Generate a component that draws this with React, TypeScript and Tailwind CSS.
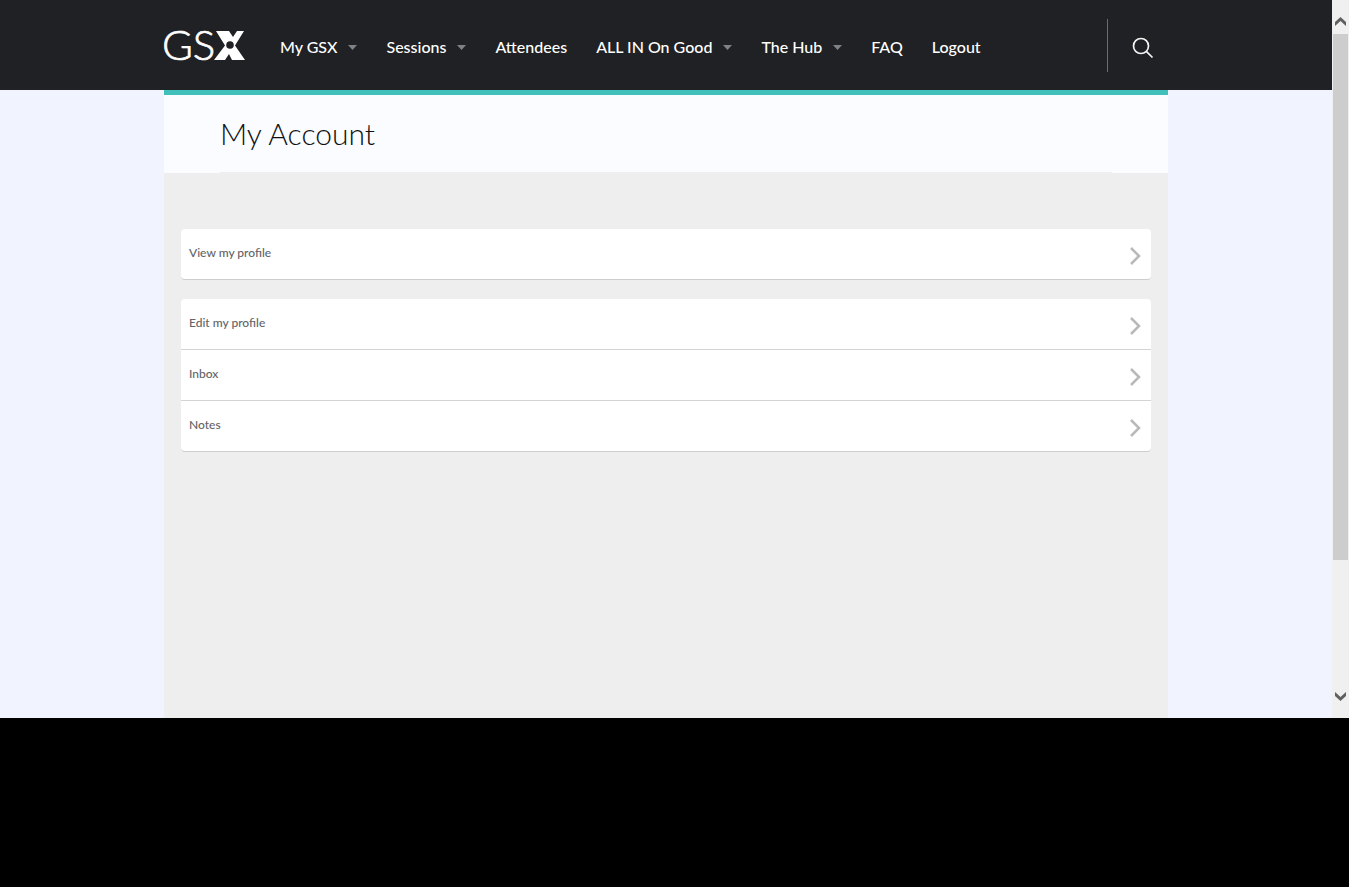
const navItems = [
  { label: "My GSX", menu: true },
  { label: "Sessions", menu: true },
  { label: "Attendees", menu: false },
  { label: "ALL IN On Good", menu: true },
  { label: "The Hub", menu: true },
  { label: "FAQ", menu: false },
  { label: "Logout", menu: false },
];

const groups = [["View my profile"], ["Edit my profile", "Inbox", "Notes"]];

function Logo() {
  return (
    <a href="#" aria-label="GSX home" className="block shrink-0">
      <svg width="82" height="60" viewBox="0 -15 82 60" className="block overflow-visible">
        <text
          x="-2"
          y="30"
          fill="#fff"
          stroke="#fff"
          strokeWidth="0.7"
          fontSize="42"
          fontWeight="300"
          fontFamily="Lato, sans-serif"
        >
          GS
        </text>
        <path d="M52 1h13l4 6 4-6h7L71 15.500 81 30H68l-3-6-4 6H50l11-14.500z" fill="#fff" />
        <circle cx="66" cy="15" r="3.800" fill="#202124" />
      </svg>
    </a>
  );
}

function Header() {
  return (
    <header className="flex h-[90px] justify-center bg-[#202124]">
      <div className="flex w-full max-w-[1004px] items-center">
        <Logo />
        <nav className="ml-[34px] grow pt-1">
          <ul className="flex gap-[29px] whitespace-nowrap text-base font-medium text-white">
            {navItems.map((item) => (
              <li key={item.label}>
                <a href="#" className="flex items-center gap-[11px]">
                  {item.label}
                  {item.menu && (
                    <svg width="9" height="5" viewBox="0 0 9 5" aria-hidden="true">
                      <path d="M0 0h9L4.500 5z" fill="#808184" />
                    </svg>
                  )}
                </a>
              </li>
            ))}
          </ul>
        </nav>
        <div className="flex h-[53px] items-center border-l border-[#6b6c6f] pt-1.5 pl-6 pr-[14px]">
          <button type="button" aria-label="Search" className="block">
            <svg width="22" height="22" viewBox="0 0 22 22" fill="none" stroke="#f4f4f4" strokeWidth="1.700">
              <circle cx="9" cy="9" r="7.500" />
              <path d="M14.300 14.300l6.200 6.200" />
            </svg>
          </button>
        </div>
      </div>
    </header>
  );
}

function Row({ label }: { label: string }) {
  return (
    <li className="border-b border-[#d4d4d4] last:border-b-0">
      <a href="#" className="flex h-[50px] items-center justify-between px-2 text-xs font-medium text-[#636467]">
        <span className="pb-0.5">{label}</span>
        <svg width="16" height="20" viewBox="0 0 16 20" fill="none" stroke="#b9b9b9" strokeWidth="2.500" className="mt-1" aria-hidden="true">
          <path d="M4 2l8 8-8 8" />
        </svg>
      </a>
    </li>
  );
}

function Scrollbar() {
  return (
    <div aria-hidden="true" className="flex w-[17px] shrink-0 flex-col items-center bg-[#f0f0f0]">
      <svg width="13" height="34" viewBox="0 0 13 34" className="shrink-0">
        <path d="M1 22v4l5.500-5 5.500 5v-4l-5.500-5z" fill="#606060" />
      </svg>
      <div className="w-[15px] grow-[526] bg-[#cdcdcd]" />
      <div className="grow-[124]" />
      <svg width="13" height="34" viewBox="0 0 13 34" className="shrink-0">
        <path d="M1 8v4l5.500 5L12 12V8l-5.500 5z" fill="#606060" />
      </svg>
    </div>
  );
}

export default function App() {
  return (
    <div className="min-h-screen bg-black font-['Lato',sans-serif]">
      <div className="flex">
        <div className="min-w-0 grow bg-[#f1f4ff]">
          <Header />
          <main className="mx-auto max-w-[1004px] border-t-[5px] border-[#40bfbb] bg-[#eee]">
            <div className="bg-[#fbfcff] px-14">
              <h1 className="border-b border-[#eee] pt-[18px] pb-[19px] text-[30px] leading-10 font-light text-[#101113]">
                My Account
              </h1>
            </div>
            <div className="flex flex-col gap-[19px] px-[17px] pt-14 pb-[266px]">
              {groups.map((rows) => (
                <ul key={rows[0]} className="rounded border-b border-[#cdcdcd] bg-white">
                  {rows.map((label) => (
                    <Row key={label} label={label} />
                  ))}
                </ul>
              ))}
            </div>
          </main>
        </div>
        <Scrollbar />
      </div>
    </div>
  );
}
